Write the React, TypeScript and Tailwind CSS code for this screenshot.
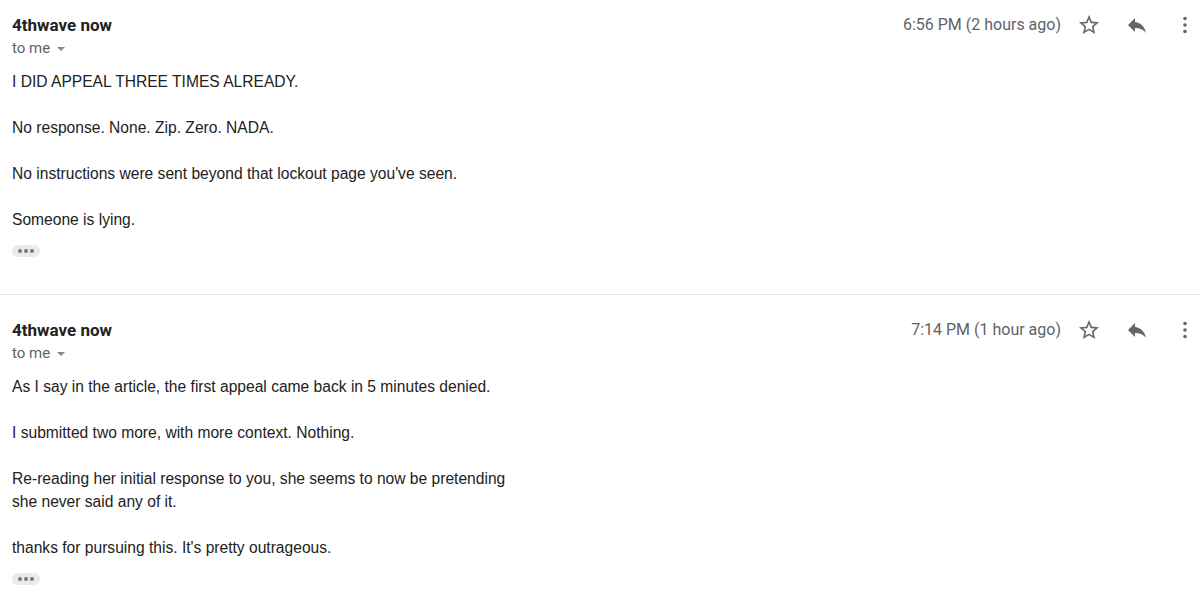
import React from "react";

interface Message {
  time: string;
  paragraphs: string[][];
}

const messages: Message[] = [
  {
    time: "6:56 PM (2 hours ago)",
    paragraphs: [
      ["I DID APPEAL THREE TIMES ALREADY."],
      ["No response. None. Zip. Zero. NADA."],
      ["No instructions were sent beyond that lockout page you've seen."],
      ["Someone is lying."],
    ],
  },
  {
    time: "7:14 PM (1 hour ago)",
    paragraphs: [
      ["As I say in the article, the first appeal came back in 5 minutes denied."],
      ["I submitted two more, with more context. Nothing."],
      [
        "Re-reading her initial response to you, she seems to now be pretending",
        "she never said any of it.",
      ],
      ["thanks for pursuing this. It's pretty outrageous."],
    ],
  },
];

const StarIcon = () => (
  <svg viewBox="0 0 24 24" className="w-6 h-6 fill-[#666]">
    <path d="M22 9.24l-7.19-.62L12 2 9.19 8.63 2 9.24l5.46 4.73L5.82 21 12 17.27 18.18 21l-1.63-7.03L22 9.24zM12 15.4l-3.76 2.27 1-4.28-3.32-2.88 4.38-.38L12 6.1l1.71 4.04 4.38.38-3.32 2.88 1 4.28L12 15.4z" />
  </svg>
);

const ReplyIcon = () => (
  <svg viewBox="0 0 24 24" className="w-6 h-6 fill-[#666]">
    <path d="M10 9V5l-7 7 7 7v-4.1c5 0 8.5 1.6 11 5.1-1-5-4-10-11-11z" />
  </svg>
);

const MoreIcon = () => (
  <svg viewBox="0 0 24 24" className="w-6 h-6 fill-[#666]">
    <circle cx="12" cy="5.5" r="1.8" />
    <circle cx="12" cy="12" r="1.8" />
    <circle cx="12" cy="18.5" r="1.8" />
  </svg>
);

const EmailMessage = ({ msg }: { msg: Message }) => (
  <div className="pl-3 pt-[15px]">
    <div className="flex items-start justify-between">
      <div>
        <div className="h-5 leading-5 text-[17px] font-bold text-[#222] font-['Roboto',sans-serif]">
          4thwave now
        </div>
        <div className="mt-[3px] h-5 flex items-center text-[15px] text-[#5f6368] font-['Roboto',sans-serif]">
          to me
          <span className="ml-[7px] mt-[1px] w-0 h-0 border-l-[4px] border-r-[4px] border-t-[4px] border-l-transparent border-r-transparent border-t-[#888]" />
        </div>
      </div>
      <div className="flex items-center h-5">
        <span className="text-[16px] text-[#5f6368] font-['Roboto',sans-serif] mr-[4px]">
          {msg.time}
        </span>
        <div className="w-12 flex justify-center"><StarIcon /></div>
        <div className="w-12 flex justify-center"><ReplyIcon /></div>
        <div className="w-[39px] flex justify-end pr-[3px]"><MoreIcon /></div>
      </div>
    </div>

    {/* body */}
    <div className="mt-[12px] text-[15.6px] leading-[23px] text-[#222] font-['Liberation_Sans',Arial,sans-serif]">
      {msg.paragraphs.map((p, i) => (
        <div key={i} className={i > 0 ? "mt-[23px]" : ""}>
          {p.map((line, j) => (
            <div key={j}>{line}</div>
          ))}
        </div>
      ))}
    </div>

    <div className="mt-[14px] w-7 h-3 rounded-full bg-[#e8eaed] flex items-center justify-center gap-[2px]">
      <span className="w-[4px] h-[4px] rounded-full bg-[#777]" />
      <span className="w-[4px] h-[4px] rounded-full bg-[#777]" />
      <span className="w-[4px] h-[4px] rounded-full bg-[#777]" />
    </div>
  </div>
);

export default function App() {
  return (
    <div className="w-[1200px] h-[604px] bg-white overflow-hidden">
      <EmailMessage msg={messages[0]} />
      <div className="mt-[37px] h-px bg-[#e5e5e5]" />
      <div className="mt-[10px]">
        <EmailMessage msg={messages[1]} />
      </div>
    </div>
  );
}
